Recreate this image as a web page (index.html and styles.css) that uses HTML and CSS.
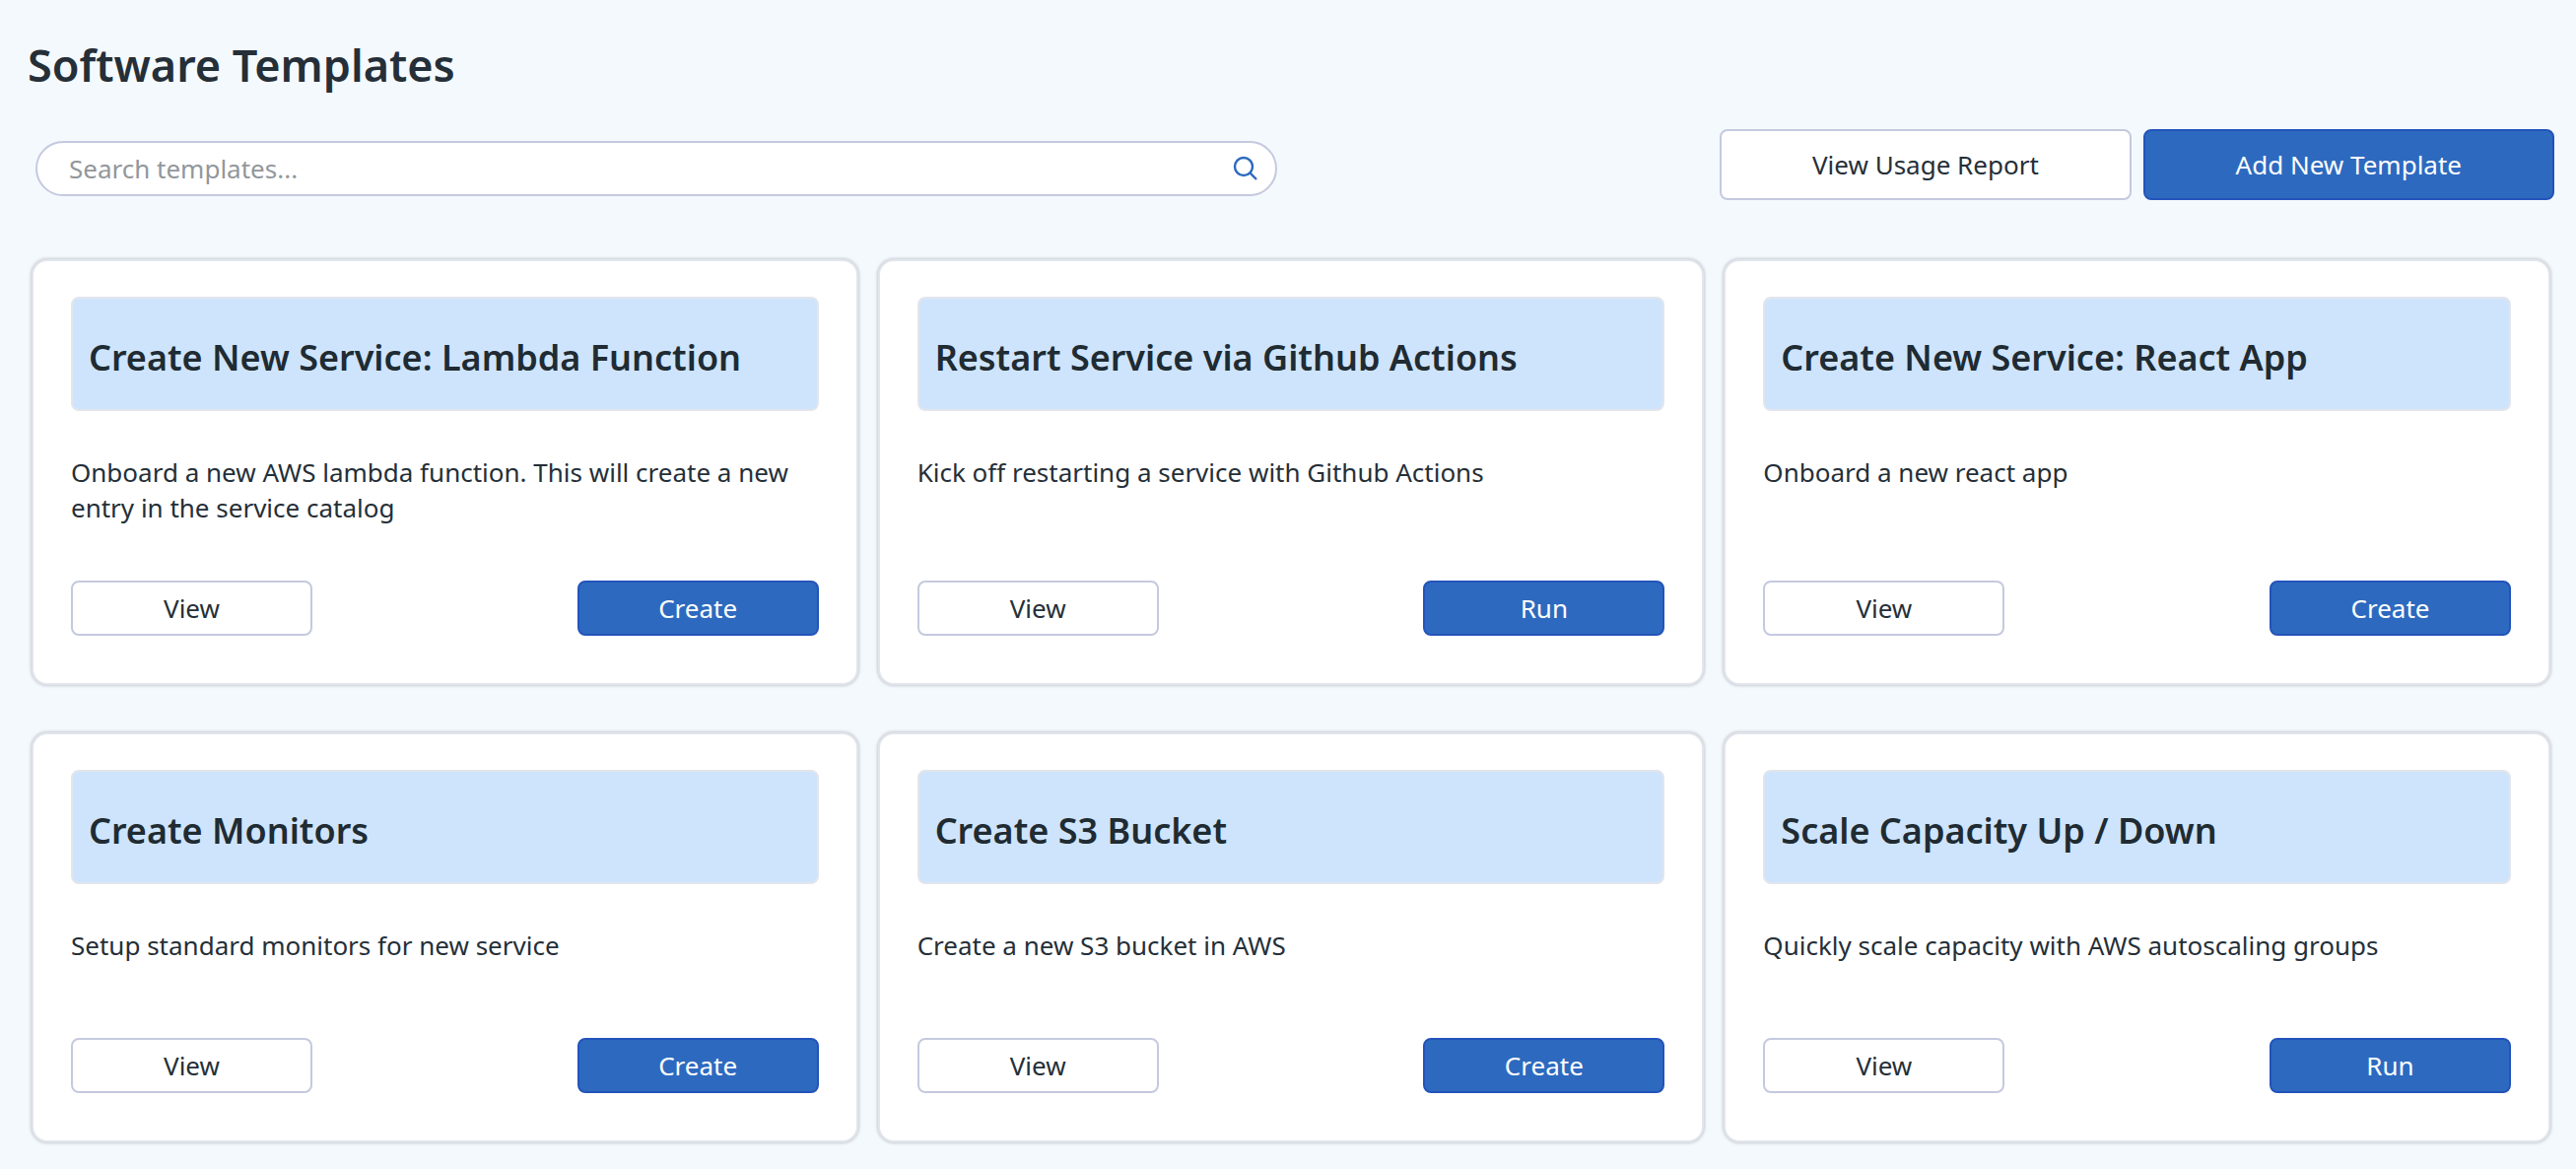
FILE: index.html
```html
<!DOCTYPE html>
<html lang="en">
<head>
<meta charset="utf-8">
<meta name="viewport" content="width=device-width, initial-scale=1">
<title>Software Templates</title>
<link rel="stylesheet" href="styles.css">
</head>
<body>
<main class="page">
  <h1 class="page-title">Software Templates</h1>
  <div class="toolbar">
    <form class="search" role="search">
      <input class="search-input" type="text" placeholder="Search templates..." aria-label="Search templates">
      <button class="search-button" type="button" aria-label="Search">
        <svg class="search-icon" viewBox="0 0 26 26" aria-hidden="true">
          <circle cx="11" cy="11" r="9"/>
          <path d="M17.5 17.5L24 24"/>
        </svg>
      </button>
    </form>
    <div class="toolbar-actions">
      <button class="button button-large" type="button">View Usage Report</button>
      <button class="button button-large button-primary" type="button">Add New Template</button>
    </div>
  </div>
  <section class="cards" aria-label="Templates">
    <article class="card">
      <h2 class="card-title">Create New Service: Lambda Function</h2>
      <p class="card-text">Onboard a new AWS lambda function. This will create a new entry in the service catalog</p>
      <div class="card-actions">
        <button class="button" type="button">View</button>
        <button class="button button-primary" type="button">Create</button>
      </div>
    </article>
    <article class="card">
      <h2 class="card-title">Restart Service via Github Actions</h2>
      <p class="card-text">Kick off restarting a service with Github Actions</p>
      <div class="card-actions">
        <button class="button" type="button">View</button>
        <button class="button button-primary" type="button">Run</button>
      </div>
    </article>
    <article class="card">
      <h2 class="card-title">Create New Service: React App</h2>
      <p class="card-text">Onboard a new react app</p>
      <div class="card-actions">
        <button class="button" type="button">View</button>
        <button class="button button-primary" type="button">Create</button>
      </div>
    </article>
    <article class="card">
      <h2 class="card-title">Create Monitors</h2>
      <p class="card-text">Setup standard monitors for new service</p>
      <div class="card-actions">
        <button class="button" type="button">View</button>
        <button class="button button-primary" type="button">Create</button>
      </div>
    </article>
    <article class="card">
      <h2 class="card-title">Create S3 Bucket</h2>
      <p class="card-text">Create a new S3 bucket in AWS</p>
      <div class="card-actions">
        <button class="button" type="button">View</button>
        <button class="button button-primary" type="button">Create</button>
      </div>
    </article>
    <article class="card">
      <h2 class="card-title">Scale Capacity Up / Down</h2>
      <p class="card-text">Quickly scale capacity with AWS autoscaling groups</p>
      <div class="card-actions">
        <button class="button" type="button">View</button>
        <button class="button button-primary" type="button">Run</button>
      </div>
    </article>
  </section>
</main>
</body>
</html>
```
FILE: styles.css
```css
* {
  box-sizing: border-box;
}

body {
  margin: 0;
  background: #f4f9fd;
  color: #252f38;
  font-family: "Noto Sans", sans-serif;
  font-size: 26px;
  line-height: 36px;
}

.page {
  padding: 34px 22px 24px 28px;
}

.page-title {
  margin: 0;
  font-size: 45px;
  line-height: 64px;
  font-weight: 600;
}

.toolbar {
  display: flex;
  justify-content: space-between;
  align-items: flex-end;
  margin-top: 33px;
  padding-left: 8px;
}

.search {
  display: flex;
  align-items: center;
  width: 49.3%;
  height: 56px;
  margin-bottom: 4px;
  padding: 0 17px 0 32px;
  border: 2px solid #c5c9df;
  border-radius: 28px;
  background: #fff;
}

.search-input {
  flex: 1;
  min-width: 0;
  padding: 0;
  border: 0;
  outline: 0;
  background: none;
  color: inherit;
  font: inherit;
}

.search-input::placeholder {
  color: #92979b;
  opacity: 1;
}

.search-button {
  display: flex;
  padding: 0;
  border: 0;
  background: none;
  cursor: pointer;
}

.search-icon {
  width: 26px;
  height: 26px;
  fill: none;
  stroke: #2c69bf;
  stroke-width: 2.4;
}

.toolbar-actions {
  display: flex;
  gap: 12px;
  width: 33.13%;
}

.button {
  width: 245px;
  height: 56px;
  padding: 0 8px;
  border: 2px solid #c5c9df;
  border-radius: 8px;
  background: #fff;
  color: inherit;
  font: inherit;
  cursor: pointer;
}

.button-large {
  flex: 1;
  height: 72px;
}

.button-primary {
  border-color: #2353bb;
  background: #2d6abf;
  color: #fff;
}

.cards {
  display: grid;
  grid-template-columns: repeat(3, 1fr);
  gap: 48px 20px;
  margin-top: 60px;
  padding: 0 4px;
}

.card {
  display: flex;
  flex-direction: column;
  padding: 36px 38px 48px;
  border: 2px solid #e2e5ec;
  border-radius: 16px;
  background: #fff;
  box-shadow: 0 0 3px 1px rgba(40, 50, 60, 0.22);
}

.card-title {
  margin: 0;
  padding: 36px 16px 28px;
  border: 2px solid #e2e5ec;
  border-radius: 8px;
  background: #cee4fc;
  color: #202b32;
  font-size: 36px;
  line-height: 48px;
  font-weight: 600;
}

.card-text {
  flex: 1;
  min-height: 56px;
  margin: 44px 0 56px;
}

.card-actions {
  display: flex;
  justify-content: space-between;
}
```
